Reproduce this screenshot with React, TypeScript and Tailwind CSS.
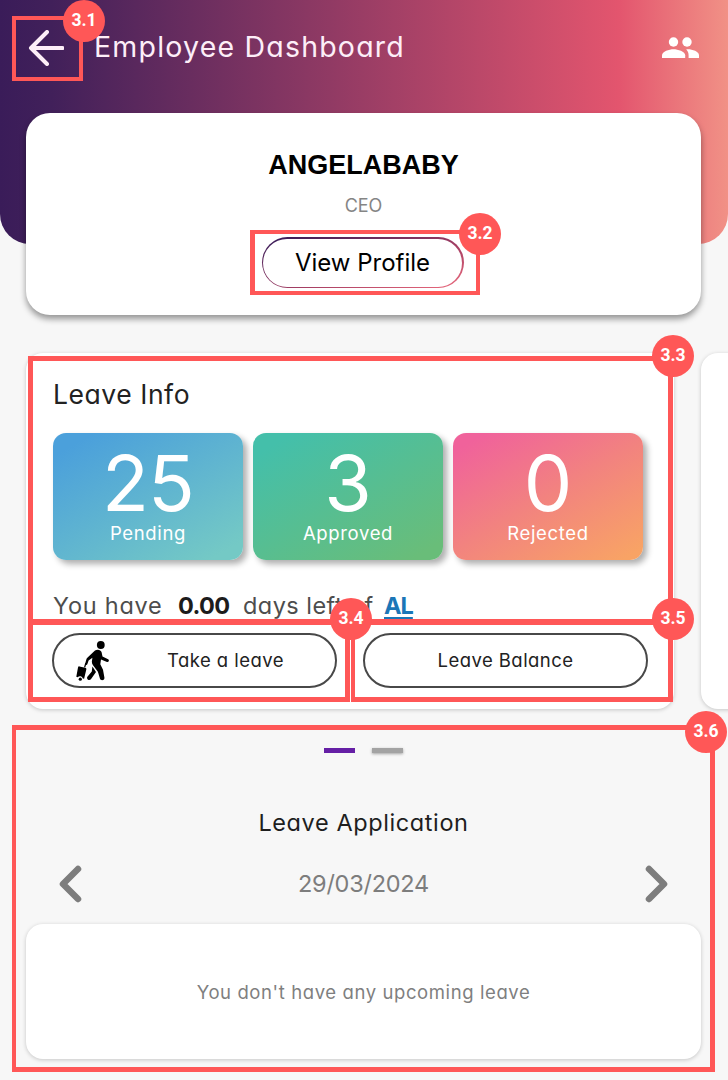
import type { ReactNode } from "react";

function StatTile({ value, label, className, valueClass = "" }: { value: string; label: string; className: string; valueClass?: string }) {
  return (
    <div
      className={`flex h-[127px] w-[190px] flex-col items-center rounded-[13px] text-white shadow-[4px_4px_6px_rgba(0,0,0,0.32)] ${className}`}
    >
      <span className={`mt-[10px] flex h-[80px] items-center text-[77px] leading-[80px] ${valueClass}`}>{value}</span>
      <span className="flex h-[21px] items-center text-[18.5px] leading-[21px] tracking-[0.65px]">{label}</span>
    </div>
  );
}

function PillButton({ icon, children }: { icon?: ReactNode; children: string }) {
  return (
    <button className="flex h-[55px] w-[285px] items-center rounded-full border-2 border-[#484848] text-[18.5px] tracking-[0.45px] text-[#222]">
      {icon}
      <span className={icon ? "ml-[57px]" : "flex-1 text-center"}>{children}</span>
    </button>
  );
}

function Traveller() {
  return (
    <svg className="ml-[22px] h-[40px] w-[34px]" viewBox="0 0 34 40" fill="#000">
      <circle cx="24.8" cy="4" r="3.9" />
      <path d="M19 9.4C21.5 7.9 24.9 8.7 25.6 11.2L26.5 15.6L32.1 18.3C33.6 19.1 32.8 21.5 31 20.9L25 18.6L24.3 23.2L27 28.8L28.4 36.4C28.9 39.3 25 40.2 24 37.7L21.9 30.8L17.2 24.6C16 23 15.6 21.4 16 19.4L16.4 16.8L12.6 19.6L11.3 23.3C10.6 24.6 8.8 23.9 9.2 22.4L10.4 18.2C10.6 17.5 11 16.9 11.6 16.4Z" />
      <path d="M16.4 25.6L20 31L18.6 33L14.9 38.2C13.2 40.2 10 38 11.4 35.8L15.8 30.4Z" />
      <path d="M9.2 22L10.5 22.5L9.2 26.6L8 26.2Z" />
      <path d="M3.4 25.4L9.2 26.8C10.1 27 10.5 27.6 10.3 28.5L8.1 37.7L6.8 37.5A3 3 0 0 0 1.7 36.2L.3 35.7L2 26.5C2.2 25.6 2.7 25.2 3.4 25.4Z" />
      <circle cx="4.3" cy="38.2" r="1.6" />
    </svg>
  );
}

function PeopleIcon() {
  return (
    <svg className="h-[21px] w-[37px]" viewBox="0 0 37 21" fill="#fff">
      <circle cx="11.5" cy="5" r="4.7" />
      <circle cx="25" cy="5" r="4.7" />
      <path d="M0 21V18.2C0 14.4 7.2 12.2 11.5 12.2S23.2 14.4 23.2 18.2V21Z" />
      <path d="M24.2 12.4C29 11.8 37 14.2 37 18.2V21H26.6V18.2C26.6 15.8 25.8 13.8 24.2 12.4Z" />
    </svg>
  );
}

function Badge({ className, children }: { className: string; children: string }) {
  return (
    <span
      className={`absolute flex h-[42px] w-[42px] items-center justify-center rounded-full bg-[#ff5757] pb-px font-['Roboto',sans-serif] text-[17.5px] leading-none font-bold text-white ${className}`}
    >
      {children}
    </span>
  );
}

function Annotations() {
  const frame = "absolute border-[#ff5757]";
  return (
    <div className="pointer-events-none absolute inset-0">
      <div className={`${frame} top-[16px] left-[12px] h-[65px] w-[71px] border-[4.5px]`} />
      <div className={`${frame} top-[230px] left-[250px] h-[65px] w-[230px] border-[4.5px] border-l-[5px]`} />
      <div className={`${frame} top-[356px] left-[28px] h-[269px] w-[645px] border-[5px] border-b-[6px]`} />
      <div className={`${frame} top-[619px] left-[28px] h-[83px] w-[322px] border-[5px] border-t-0`} />
      <div className={`${frame} top-[619px] left-[351px] h-[83px] w-[322px] border-[5px] border-l-4 border-t-0`} />
      <div className={`${frame} top-[725px] left-[12px] h-[347px] w-[703px] border-[5px] border-l-4`} />
      <Badge className="top-0 left-[63px]">3.1</Badge>
      <Badge className="top-[213px] left-[459px]">3.2</Badge>
      <Badge className="top-[335px] left-[652px]">3.3</Badge>
      <Badge className="top-[598px] left-[330px]">3.4</Badge>
      <Badge className="top-[598px] left-[652px]">3.5</Badge>
      <Badge className="top-[711px] left-[685px]">3.6</Badge>
    </div>
  );
}

export default function App() {
  return (
    <div className="relative h-[1080px] w-[728px] overflow-hidden bg-[#f7f7f7] font-['Inter',sans-serif] [font-feature-settings:'cv11']">
      <header className="h-[244px] rounded-b-[30px] bg-[linear-gradient(90deg,#3a1c59_0%,#41205a_7%,#e3556e_85%,#f19186_100%)]">
        <div className="flex h-[95px] items-center pr-[29px] pl-[28px] text-[#fdeef8]">
          <svg className="h-[36px] w-[36px]" viewBox="0 0 36 36" fill="none" stroke="currentColor" strokeWidth="4" strokeLinecap="round" strokeLinejoin="round">
            <path d="M19 2L3 18L19 34M4 18H34.5" />
          </svg>
          <h1 className="ml-[30px] flex-1 text-[28.5px] font-normal tracking-[1.2px] whitespace-nowrap">Employee Dashboard</h1>
          <PeopleIcon />
        </div>
      </header>

      <section className="-mt-[131px] ml-[26px] flex h-[202px] w-[675px] flex-col items-center rounded-[24px] bg-white pt-[36px] shadow-[0_4px_6px_rgba(0,0,0,0.4)]">
        <h2 className="font-['Liberation_Sans',sans-serif] text-[27px] leading-[32px] font-bold text-black">ANGELABABY</h2>
        <p className="mt-[13px] text-[18px] leading-[24px] text-[#858585]">CEO</p>
        <button className="mt-[19px] mr-[2px] h-[51px] w-[202px] rounded-full bg-[linear-gradient(165deg,#3a1c59_5%,#a84064_60%,#e3657a_95%)] p-[1.5px]">
          <span className="flex h-full items-center justify-center rounded-full bg-white text-[24px] text-black">View Profile</span>
        </button>
      </section>

      <div className="mt-[38px] flex w-[900px] gap-[27px] pl-[26px]">
        <section className="h-[356px] w-[648px] rounded-[17px] bg-white pt-[24px] pl-[26px] shadow-[0_1px_4px_rgba(0,0,0,0.2)]">
          <h3 className="pl-px text-[26.5px] leading-[34px] tracking-[0.55px] text-[#222]">Leave Info</h3>
          <div className="mt-[22px] flex gap-[10px] pl-px">
            <StatTile value="25" label="Pending" valueClass="tracking-[-1px]" className="bg-[linear-gradient(150deg,#4ba0db_10%,#74c9c5_92%)]" />
            <StatTile value="3" label="Approved" className="bg-[linear-gradient(150deg,#44bfaa_10%,#69bd79_92%)]" />
            <StatTile value="0" label="Rejected" className="bg-[linear-gradient(150deg,#f0629b_8%,#f2837f_50%,#f8a365_95%)]" />
          </div>
          <p className="mt-[30px] flex h-[32px] items-center pl-px text-[23.5px] whitespace-nowrap text-[#4d4d4d]">
            <span className="w-[125px] tracking-[0.75px]">You have</span>
            <b className="w-[65px] tracking-[-0.6px] text-[#1c1c1c]">0.00</b>
            <span className="w-[141px] tracking-[0.45px]">days left of</span>
            <a className="font-bold tracking-[-1px] text-[#1b76b7] underline decoration-2 underline-offset-[3px]">AL</a>
          </p>
          <div className="mt-[11px] flex gap-[26px]">
            <PillButton icon={<Traveller />}>Take a leave</PillButton>
            <PillButton>Leave Balance</PillButton>
          </div>
        </section>
        <section className="h-[356px] w-[199px] rounded-[17px] bg-white shadow-[0_1px_4px_rgba(0,0,0,0.2)]" />
      </div>

      <div className="mt-[39px] flex gap-[17px] pl-[324px]">
        <i className="h-[5px] w-[31px] bg-[#651fa5]" />
        <i className="h-[5px] w-[31px] bg-[#a3a3a3] shadow-[0_1px_3px_rgba(0,0,0,0.35)]" />
      </div>

      <section className="mt-[54px] ml-[26px] flex w-[675px] flex-col items-center">
        <h3 className="text-[23.5px] leading-[32px] tracking-[0.6px] text-[#1e1e1e]">Leave Application</h3>
        <div className="mt-[25px] flex h-[40px] w-[609px] items-center justify-between text-[#7d7d7d]">
          <svg className="h-[38px] w-[23px]" viewBox="0 0 23 38" fill="none" stroke="currentColor" strokeWidth="6.5" strokeLinecap="round" strokeLinejoin="round">
            <path d="M19 4L4 19L19 34" />
          </svg>
          <span className="text-[23.5px] tracking-[-0.25px]">29/03/2024</span>
          <svg className="h-[38px] w-[23px]" viewBox="0 0 23 38" fill="none" stroke="currentColor" strokeWidth="6.5" strokeLinecap="round" strokeLinejoin="round">
            <path d="M4 4L19 19L4 34" />
          </svg>
        </div>
        <div className="mt-[20px] flex h-[135px] w-[675px] items-center justify-center rounded-[17px] bg-white pt-[2px] text-[18.5px] tracking-[0.6px] text-[#7f7f7f] shadow-[0_1px_4px_rgba(0,0,0,0.2)]">
          You don't have any upcoming leave
        </div>
      </section>

      <Annotations />
    </div>
  );
}
